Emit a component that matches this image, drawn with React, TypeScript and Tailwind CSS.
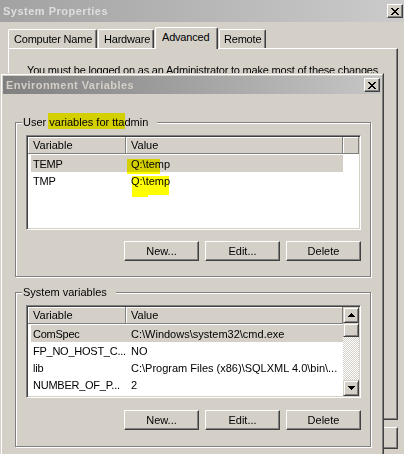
import type { ReactNode } from 'react'

// classic 3D edges
const raised =
  'bg-[#d4d0c8] border border-t-white border-l-white border-r-[#404040] border-b-[#404040] shadow-[inset_-1px_-1px_0_#808080]'
const scrollBtn =
  'bg-[#d4d0c8] border border-t-[#d4d0c8] border-l-[#d4d0c8] border-r-[#404040] border-b-[#404040] shadow-[inset_1px_1px_0_#ffffff,inset_-1px_-1px_0_#808080]'

type Row = { name: string; value: string; selected?: boolean }

const userVars: Row[] = [
  { name: 'TEMP', value: 'Q:\\temp', selected: true },
  { name: 'TMP', value: 'Q:\\temp' },
]

const systemVars: Row[] = [
  { name: 'ComSpec', value: 'C:\\Windows\\system32\\cmd.exe', selected: true },
  { name: 'FP_NO_HOST_C...', value: 'NO' },
  { name: 'lib', value: 'C:\\Program Files (x86)\\SQLXML 4.0\\bin\\...' },
  { name: 'NUMBER_OF_P...', value: '2' },
]

function PixelGlyph({ rows }: { rows: string[] }) {
  return (
    <svg width={rows[0]!.length} height={rows.length} shapeRendering="crispEdges">
      {rows.flatMap((r, y) =>
        [...r].map((c, x) =>
          c === '#' ? <rect key={`${x}-${y}`} x={x} y={y} width={1} height={1} fill="#000" /> : null
        )
      )}
    </svg>
  )
}

const X_ROWS = ['##....##', '.##..##.', '..####..', '...##...', '..####..', '.##..##.', '##....##']
const UP_ROWS = ['...#...', '..###..', '.#####.', '#######']
const DOWN_ROWS = ['#######', '.#####.', '..###..', '...#...']

function CloseButton() {
  return (
    <div className={`${raised} w-[16px] h-[14px] flex items-center justify-center shrink-0`}>
      <PixelGlyph rows={X_ROWS} />
    </div>
  )
}

function Button({ children, h = 'h-[20px]' }: { children: ReactNode; h?: string }) {
  return (
    <div className={`${raised} w-[75px] ${h} flex items-center justify-center`}>{children}</div>
  )
}

function Scrollbar() {
  return (
    <div className="w-[16px] flex flex-col shrink-0">
      <div className={`${scrollBtn} h-[16px] flex items-center justify-center`}>
        <PixelGlyph rows={UP_ROWS} />
      </div>
      <div className={`${scrollBtn} h-[14px]`} />
      <div className="flex-1 bg-[image:repeating-conic-gradient(#d4d0c8_0%_25%,#ffffff_0%_50%)] bg-[length:2px_2px]" />
      <div className={`${scrollBtn} h-[16px] flex items-center justify-center`}>
        <PixelGlyph rows={DOWN_ROWS} />
      </div>
    </div>
  )
}

function VarList({ rows, height, scroll }: { rows: Row[]; height: string; scroll?: boolean }) {
  const head = 'h-[17px] leading-[17px] pl-[5px] border-r border-b border-[#808080] shadow-[inset_1px_1px_0_#ffffff]'
  return (
    <div
      className={`${height} bg-white flex border border-t-[#808080] border-l-[#808080] border-r-white border-b-white shadow-[inset_1px_1px_0_#404040,inset_-1px_-1px_0_#d4d0c8] p-[1px]`}
    >
      <div className="flex-1 flex flex-col overflow-hidden">
        <div className="flex bg-[#d4d0c8] shrink-0">
          <div className={`${head} w-[98px]`}>Variable</div>
          <div className={`${head} w-[217px]`}>Value</div>
          {!scroll && <div className={`${head} flex-1`} />}
        </div>
        <div className="pt-[1px]">
          {rows.map(r => (
            <div
              key={r.name}
              className={`flex ml-[3px] w-[312px] h-[17px] leading-[18px] whitespace-nowrap ${r.selected ? 'bg-[#d4d0c8]' : ''}`}
            >
              <div className="w-[95px] pl-[2px] overflow-hidden tracking-[-0.25px]">{r.name}</div>
              <div className="flex-1 pl-[5px] overflow-hidden">{r.value}</div>
            </div>
          ))}
        </div>
      </div>
      {scroll && <Scrollbar />}
    </div>
  )
}

function Group({
  label,
  rows,
  listHeight,
  gap,
  scroll,
  className = '',
}: {
  label: string
  rows: Row[]
  listHeight: string
  gap: string
  scroll?: boolean
  className?: string
}) {
  return (
    <div
      className={`relative w-[356px] h-[155px] border border-[#808080] shadow-[inset_1px_1px_0_#ffffff,1px_1px_0_#ffffff] pt-[12px] pl-[10px] pr-[9px] ${className}`}
    >
      <span className="absolute top-[-7px] left-[6px] pl-[1px] pr-[9px] bg-[#d4d0c8] leading-[13px]">{label}</span>
      <VarList rows={rows} height={listHeight} scroll={scroll} />
      <div className={`flex justify-end gap-[6px] ${gap}`}>
        <Button>New...</Button>
        <Button>Edit...</Button>
        <Button>Delete</Button>
      </div>
    </div>
  )
}

function Tab({ label, w, pl, selected }: { label: string; w: string; pl: string; selected?: boolean }) {
  return (
    <div
      className={`${w} ${pl} ${
        selected ? 'h-[22px] mb-[-1px] z-10 pt-[3px]' : 'h-[19px] pt-[3px]'
      } relative bg-[#d4d0c8] border-t border-l border-r border-t-white border-l-white border-r-[#404040] rounded-t-[2px] shadow-[inset_-1px_0_0_#808080] leading-[13px] whitespace-nowrap tracking-[-0.2px]`}
    >
      {label}
    </div>
  )
}

export default function App() {
  return (
    <div className="relative w-[404px] h-[454px] overflow-hidden bg-[#d4d0c8] text-[11px] leading-[13px] text-black font-['Liberation_Sans',Arial,sans-serif]">
      {/* System Properties (inactive, behind) */}
      <div className="flex flex-col h-full">
        <div className="h-[22px] flex items-center pl-[3px] pr-[1px] bg-linear-to-r from-[#a2a2a2] to-[#cbcbcb]">
          <span className="flex-1 font-bold text-[#dedede] tracking-[0.5px]">System Properties</span>
          <CloseButton />
        </div>
        <div className="h-[26px] flex items-end pl-[8px] gap-[1px]">
          <Tab label="Computer Name" w="w-[89px]" pl="pl-[5px]" />
          <Tab label="Hardware" w="w-[56px]" pl="pl-[5px]" />
          <Tab label="Advanced" w="w-[63px]" pl="pl-[6px]" selected />
          <Tab label="Remote" w="w-[47px]" pl="pl-[4px]" />
        </div>
        <div className="ml-[8px] w-[390px] h-[372px] shrink-0 border border-t-white border-l-white border-r-[#404040] border-b-[#404040] shadow-[inset_-1px_-1px_0_#808080] pt-[15px] pl-[18px] whitespace-nowrap tracking-[-0.2px]">
          You must be logged on as an Administrator to make most of these changes
        </div>
        <div className="mt-[7px] flex justify-end gap-[6px] pr-[6px]">
          <Button h="h-[22px]">OK</Button>
          <Button h="h-[22px]">Cancel</Button>
          <Button h="h-[22px]">Apply</Button>
        </div>
      </div>

      {/* Environment Variables dialog */}
      <div className="absolute left-0 top-[73px] w-[384px] h-[400px] border border-t-[#d4d0c8] border-l-[#d4d0c8] border-r-[#404040] border-b-[#404040]">
        <div className="h-full border border-t-white border-l-white border-r-[#808080] border-b-[#808080] p-[1px] bg-[#d4d0c8]">
          <div className="h-[18px] flex items-center pl-[3px] pr-[1px] bg-linear-to-r from-[#808080] to-[#c6c6c6]">
            <span className="flex-1 font-bold text-[#d4d0c8] tracking-[0.45px]">Environment Variables</span>
            <CloseButton />
          </div>
          <div className="pl-[12px] pt-[28px] flex flex-col">
            <Group label="User variables for ttadmin" rows={userVars} listHeight="h-[95px]" gap="mt-[11px]" />
            <Group
              label="System variables"
              rows={systemVars}
              listHeight="h-[93px]"
              gap="mt-[12px]"
              scroll
              className="mt-[15px]"
            />
          </div>
        </div>
      </div>

      {/* highlighter marks */}
      <div className="absolute left-[48px] top-[113px] w-[77px] h-[16px] bg-[#ffff00] mix-blend-multiply pointer-events-none" />
      <div className="absolute left-[127px] top-[159px] w-[33px] h-[15px] bg-[#ffff00] mix-blend-multiply pointer-events-none" />
      <div className="absolute left-[132px] top-[176px] w-[37px] h-[19px] bg-[#ffff00] mix-blend-multiply pointer-events-none" />
      <div className="absolute left-[132px] top-[195px] w-[16px] h-[2px] bg-[#ffff00] mix-blend-multiply pointer-events-none" />
    </div>
  )
}
